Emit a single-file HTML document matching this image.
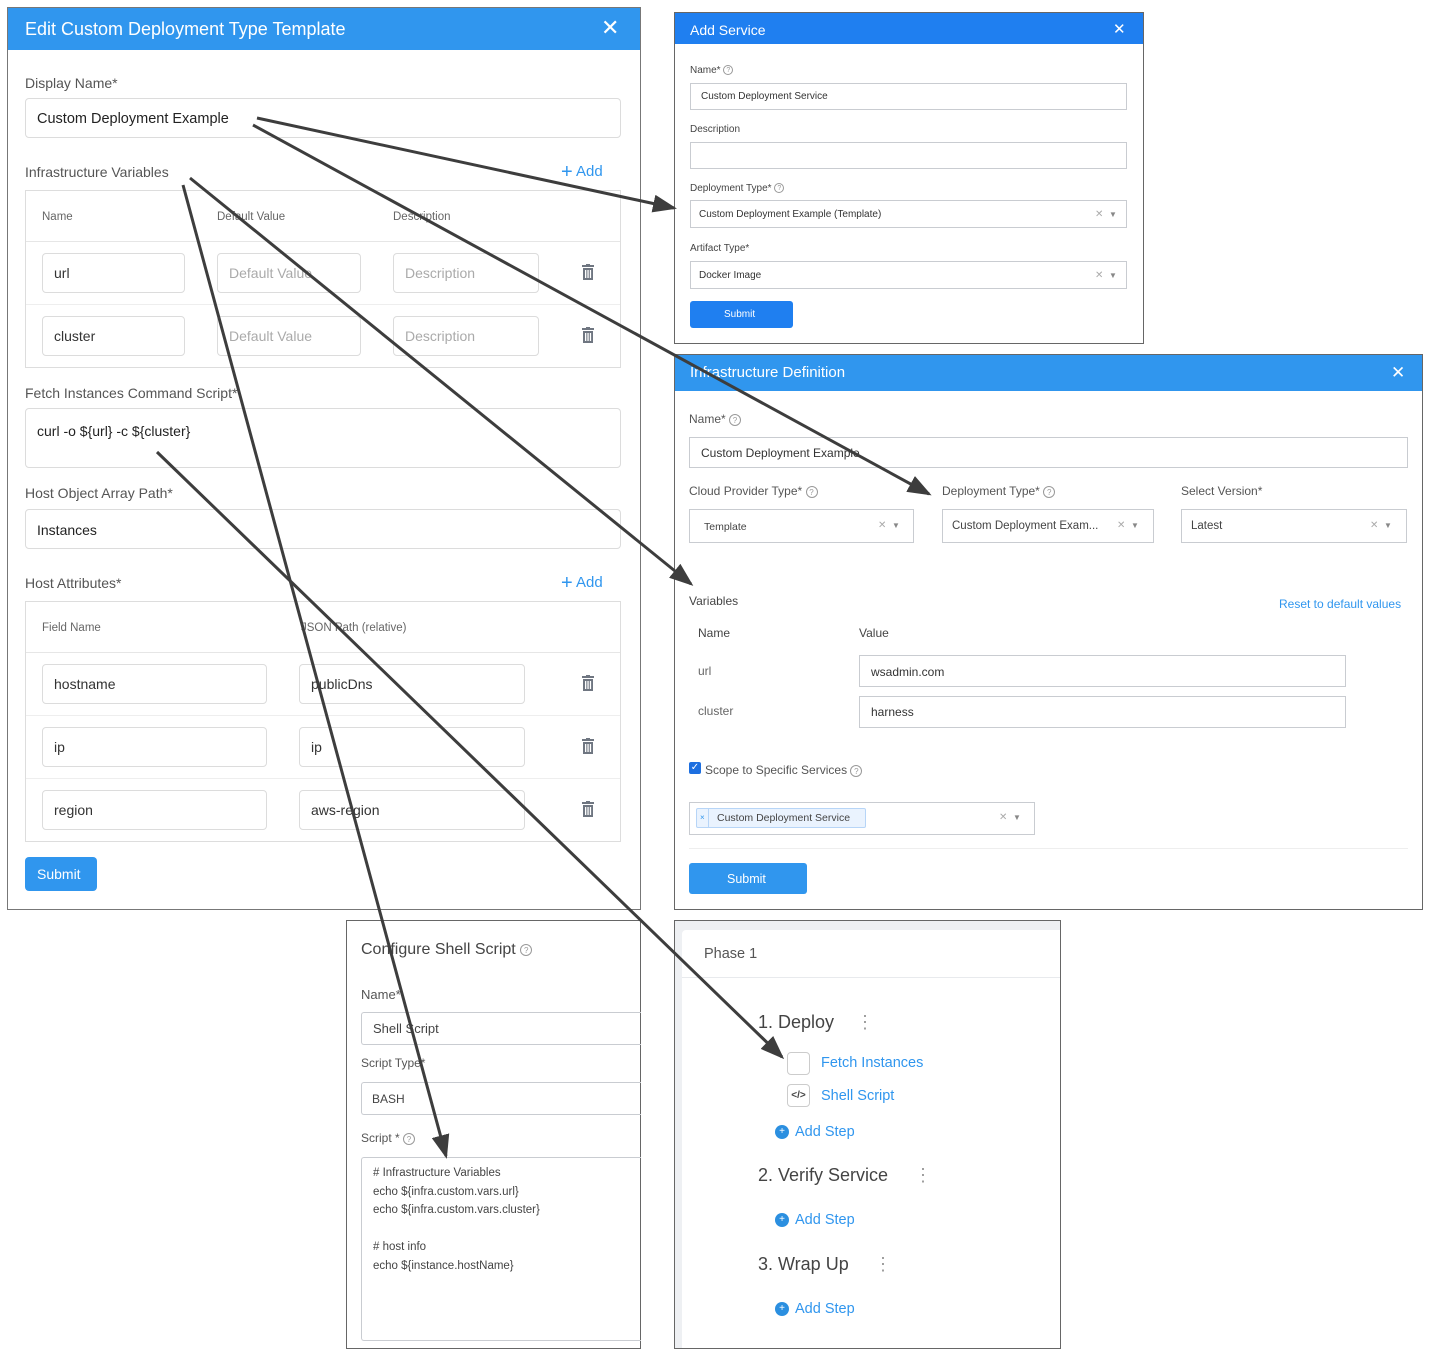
<!DOCTYPE html>
<html><head><meta charset="utf-8">
<style>
*{box-sizing:border-box;margin:0;padding:0}
body{width:1430px;height:1370px;background:#fff;position:relative;overflow:hidden;font-family:"Liberation Sans",sans-serif;color:#333}
.a{position:absolute}
.t{position:absolute;white-space:nowrap;line-height:20px}
.box{position:absolute;border:1px solid #dcdcdc;border-radius:4px;background:#fff}
.in{position:absolute;border:1px solid #c9ccd1;background:#fff}
.hd{position:absolute;color:#fff}
.q{display:inline-block;border:1px solid #999;border-radius:50%;color:#999;text-align:center;vertical-align:middle}
</style></head><body>

<!-- Panel 1 -->
<div class="a" style="left:7px;top:7px;width:634px;height:903px;border:1px solid #777;background:#fff"></div>
<div class="hd" style="left:8px;top:8px;width:632px;height:42px;background:#3096ee"></div>
<div class="t" style="left:25px;top:19px;color:#fff;font-size:18px">Edit Custom Deployment Type Template</div>
<div class="t" style="left:601px;top:18px;color:#fff;font-size:22px">✕</div>

<div class="t" style="left:25px;top:73px;font-size:14px;color:#555">Display Name*</div>
<div class="box" style="left:25px;top:98px;width:596px;height:40px"></div>
<div class="t" style="left:37px;top:109px;font-size:14.5px;color:#222">Custom Deployment Example</div>

<div class="t" style="left:25px;top:162px;font-size:14px;color:#555">Infrastructure Variables</div>
<div class="t" style="left:561px;top:162px;font-size:15px;color:#3096ee"><span style="font-size:20px;vertical-align:-2px">+</span> Add</div>
<div class="a" style="left:25px;top:190px;width:596px;height:178px;border:1px solid #ddd"></div>
<div class="a" style="left:26px;top:241px;width:594px;height:1px;background:#e6e6e6"></div>
<div class="a" style="left:26px;top:304px;width:594px;height:1px;background:#eee"></div>
<div class="t" style="left:42px;top:207px;font-size:11.5px;color:#666">Name</div>
<div class="t" style="left:217px;top:207px;font-size:11.5px;color:#666">Default Value</div>
<div class="t" style="left:393px;top:207px;font-size:11.5px;color:#666">Description</div>
<div class="box" style="left:42px;top:253px;width:143px;height:40px"></div>
<div class="box" style="left:217px;top:253px;width:144px;height:40px"></div>
<div class="box" style="left:393px;top:253px;width:146px;height:40px"></div>
<div class="t" style="left:54px;top:263px;font-size:14px">url</div>
<div class="t" style="left:229px;top:263px;font-size:14px;color:#aaa">Default Value</div>
<div class="t" style="left:405px;top:263px;font-size:14px;color:#aaa">Description</div>
<div class="box" style="left:42px;top:316px;width:143px;height:40px"></div>
<div class="box" style="left:217px;top:316px;width:144px;height:40px"></div>
<div class="box" style="left:393px;top:316px;width:146px;height:40px"></div>
<div class="t" style="left:54px;top:326px;font-size:14px">cluster</div>
<div class="t" style="left:229px;top:326px;font-size:14px;color:#aaa">Default Value</div>
<div class="t" style="left:405px;top:326px;font-size:14px;color:#aaa">Description</div>

<div class="t" style="left:25px;top:383px;font-size:14px;color:#555">Fetch Instances Command Script*</div>
<div class="box" style="left:25px;top:408px;width:596px;height:60px"></div>
<div class="t" style="left:37px;top:421px;font-size:14px;color:#222">curl -o ${url} -c ${cluster}</div>

<div class="t" style="left:25px;top:483px;font-size:14px;color:#555">Host Object Array Path*</div>
<div class="box" style="left:25px;top:509px;width:596px;height:40px"></div>
<div class="t" style="left:37px;top:520px;font-size:14px;color:#222">Instances</div>

<div class="t" style="left:25px;top:573px;font-size:14px;color:#555">Host Attributes*</div>
<div class="t" style="left:561px;top:573px;font-size:15px;color:#3096ee"><span style="font-size:20px;vertical-align:-2px">+</span> Add</div>
<div class="a" style="left:25px;top:601px;width:596px;height:241px;border:1px solid #ddd"></div>
<div class="a" style="left:26px;top:652px;width:594px;height:1px;background:#e6e6e6"></div>
<div class="a" style="left:26px;top:715px;width:594px;height:1px;background:#eee"></div>
<div class="a" style="left:26px;top:778px;width:594px;height:1px;background:#eee"></div>
<div class="t" style="left:42px;top:618px;font-size:11.5px;color:#666">Field Name</div>
<div class="t" style="left:301px;top:618px;font-size:11.5px;color:#666">JSON Path (relative)</div>
<div class="box" style="left:42px;top:664px;width:225px;height:40px"></div>
<div class="box" style="left:299px;top:664px;width:226px;height:40px"></div>
<div class="t" style="left:54px;top:674px;font-size:14px">hostname</div>
<div class="t" style="left:311px;top:674px;font-size:14px">publicDns</div>
<div class="box" style="left:42px;top:727px;width:225px;height:40px"></div>
<div class="box" style="left:299px;top:727px;width:226px;height:40px"></div>
<div class="t" style="left:54px;top:737px;font-size:14px">ip</div>
<div class="t" style="left:311px;top:737px;font-size:14px">ip</div>
<div class="box" style="left:42px;top:790px;width:225px;height:40px"></div>
<div class="box" style="left:299px;top:790px;width:226px;height:40px"></div>
<div class="t" style="left:54px;top:800px;font-size:14px">region</div>
<div class="t" style="left:311px;top:800px;font-size:14px">aws-region</div>

<div class="a" style="left:25px;top:857px;width:72px;height:34px;background:#3096ee;border-radius:4px"></div>
<div class="t" style="left:37px;top:864px;font-size:14px;color:#fff">Submit</div>

<!-- Panel 2 -->
<div class="a" style="left:674px;top:12px;width:470px;height:332px;border:1px solid #666;background:#fff"></div>
<div class="hd" style="left:675px;top:13px;width:468px;height:31px;background:#1f7ff0"></div>
<div class="t" style="left:690px;top:20px;color:#fff;font-size:14px">Add Service</div>
<div class="t" style="left:1113px;top:20px;color:#fff;font-size:15px">✕</div>
<div class="t" style="left:690px;top:61px;font-size:10px;color:#444">Name* <span class="q" style="width:10px;height:10px;font-size:7px;line-height:9px">?</span></div>
<div class="in" style="left:690px;top:83px;width:437px;height:27px"></div>
<div class="t" style="left:701px;top:87px;font-size:10px;color:#333">Custom Deployment Service</div>
<div class="t" style="left:690px;top:120px;font-size:10px;color:#444">Description</div>
<div class="in" style="left:690px;top:142px;width:437px;height:27px"></div>
<div class="t" style="left:690px;top:179px;font-size:10px;color:#444">Deployment Type* <span class="q" style="width:10px;height:10px;font-size:7px;line-height:9px">?</span></div>
<div class="in" style="left:690px;top:200px;width:437px;height:28px"></div>
<div class="t" style="left:699px;top:205px;font-size:10px;color:#333">Custom Deployment Example (Template)</div>
<div class="t" style="left:1095px;top:205px;font-size:10px;color:#aaa">✕ &nbsp;<span style="font-size:8px;color:#888">▼</span></div>
<div class="t" style="left:690px;top:239px;font-size:10px;color:#444">Artifact Type*</div>
<div class="in" style="left:690px;top:261px;width:437px;height:28px"></div>
<div class="t" style="left:699px;top:266px;font-size:10px;color:#333">Docker Image</div>
<div class="t" style="left:1095px;top:266px;font-size:10px;color:#aaa">✕ &nbsp;<span style="font-size:8px;color:#888">▼</span></div>
<div class="a" style="left:690px;top:301px;width:103px;height:27px;background:#1f7ff0;border-radius:3px"></div>
<div class="t" style="left:724px;top:305px;font-size:10px;color:#fff">Submit</div>

<!-- Panel 3 -->
<div class="a" style="left:674px;top:354px;width:749px;height:556px;border:1px solid #666;background:#fff"></div>
<div class="hd" style="left:675px;top:355px;width:747px;height:36px;background:#3096ee"></div>
<div class="t" style="left:690px;top:363px;color:#fff;font-size:15px">Infrastructure Definition</div>
<div class="t" style="left:1391px;top:363px;color:#fff;font-size:17px">✕</div>
<div class="t" style="left:689px;top:409px;font-size:12px;color:#555">Name* <span class="q" style="width:12px;height:12px;font-size:8px;line-height:11px">?</span></div>
<div class="in" style="left:689px;top:437px;width:719px;height:31px"></div>
<div class="t" style="left:701px;top:443px;font-size:12px;color:#333">Custom Deployment Example</div>
<div class="t" style="left:689px;top:481px;font-size:12px;color:#555">Cloud Provider Type* <span class="q" style="width:12px;height:12px;font-size:8px;line-height:11px">?</span></div>
<div class="t" style="left:942px;top:481px;font-size:12px;color:#555">Deployment Type* <span class="q" style="width:12px;height:12px;font-size:8px;line-height:11px">?</span></div>
<div class="t" style="left:1181px;top:481px;font-size:12px;color:#555">Select Version*</div>
<div class="in" style="left:689px;top:509px;width:225px;height:34px"></div>
<div class="in" style="left:942px;top:509px;width:212px;height:34px"></div>
<div class="in" style="left:1181px;top:509px;width:226px;height:34px"></div>
<div class="t" style="left:704px;top:517px;font-size:10.5px;color:#444">Template</div>
<div class="t" style="left:952px;top:516px;font-size:11.5px;color:#444">Custom Deployment Exam...</div>
<div class="t" style="left:1191px;top:516px;font-size:11.5px;color:#444">Latest</div>
<div class="t" style="left:878px;top:516px;font-size:10px;color:#aaa">✕ &nbsp;<span style="font-size:8px;color:#888">▼</span></div>
<div class="t" style="left:1117px;top:516px;font-size:10px;color:#aaa">✕ &nbsp;<span style="font-size:8px;color:#888">▼</span></div>
<div class="t" style="left:1370px;top:516px;font-size:10px;color:#aaa">✕ &nbsp;<span style="font-size:8px;color:#888">▼</span></div>
<div class="t" style="left:689px;top:591px;font-size:12px;color:#444">Variables</div>
<div class="t" style="left:1279px;top:594px;font-size:12px;color:#3096ee">Reset to default values</div>
<div class="t" style="left:698px;top:623px;font-size:12px;color:#444">Name</div>
<div class="t" style="left:859px;top:623px;font-size:12px;color:#444">Value</div>
<div class="t" style="left:698px;top:661px;font-size:12px;color:#666">url</div>
<div class="in" style="left:859px;top:655px;width:487px;height:32px"></div>
<div class="t" style="left:871px;top:662px;font-size:12px;color:#333">wsadmin.com</div>
<div class="t" style="left:698px;top:701px;font-size:12px;color:#666">cluster</div>
<div class="in" style="left:859px;top:696px;width:487px;height:32px"></div>
<div class="t" style="left:871px;top:702px;font-size:12px;color:#333">harness</div>
<div class="a" style="left:689px;top:762px;width:12px;height:12px;background:#1d6fe0;border-radius:2px;color:#fff;font-size:10px;line-height:12px;text-align:center">✓</div>
<div class="t" style="left:705px;top:760px;font-size:12px;color:#555">Scope to Specific Services <span class="q" style="width:12px;height:12px;font-size:8px;line-height:11px">?</span></div>
<div class="in" style="left:689px;top:802px;width:346px;height:33px"></div>
<div class="a" style="left:696px;top:808px;width:170px;height:20px;background:#eaf3fe;border:1px solid #b7d5f7;border-radius:2px"></div>
<div class="a" style="left:708px;top:808px;width:1px;height:20px;background:#b7d5f7"></div>
<div class="t" style="left:700px;top:808px;font-size:8px;color:#3096ee">×</div>
<div class="t" style="left:717px;top:808px;font-size:10.5px;color:#444">Custom Deployment Service</div>
<div class="t" style="left:999px;top:808px;font-size:10px;color:#aaa">✕ &nbsp;<span style="font-size:8px;color:#888">▼</span></div>
<div class="a" style="left:689px;top:848px;width:719px;height:1px;background:#eee"></div>
<div class="a" style="left:689px;top:863px;width:118px;height:31px;background:#3096ee;border-radius:3px"></div>
<div class="t" style="left:727px;top:869px;font-size:12.5px;color:#fff">Submit</div>

<!-- Panel 4 -->
<div class="a" style="left:346px;top:920px;width:295px;height:429px;border:1px solid #666;background:#fff"></div>
<div class="t" style="left:361px;top:940px;font-size:16px;color:#444">Configure Shell Script <span class="q" style="width:12px;height:12px;font-size:8px;line-height:11px">?</span></div>
<div class="t" style="left:361px;top:985px;font-size:13px;color:#555">Name*</div>
<div class="a" style="left:361px;top:1012px;width:280px;height:33px;border:1px solid #c9ccd1;border-right:none;border-radius:3px 0 0 3px"></div>
<div class="t" style="left:373px;top:1019px;font-size:13px;color:#444">Shell Script</div>
<div class="t" style="left:361px;top:1053px;font-size:12px;color:#555">Script Type*</div>
<div class="a" style="left:361px;top:1082px;width:280px;height:33px;border:1px solid #c9ccd1;border-right:none;border-radius:3px 0 0 3px"></div>
<div class="t" style="left:372px;top:1089px;font-size:12px;color:#444">BASH</div>
<div class="t" style="left:361px;top:1128px;font-size:12px;color:#555">Script * <span class="q" style="width:12px;height:12px;font-size:8px;line-height:11px">?</span></div>
<div class="a" style="left:361px;top:1157px;width:280px;height:184px;border:1px solid #c9ccd1;border-right:none;border-radius:3px 0 0 3px"></div>
<div class="a" style="left:373px;top:1164px;font-size:11.5px;color:#444;line-height:18.5px;white-space:pre">#&nbsp;Infrastructure Variables
echo ${infra.custom.vars.url}
echo ${infra.custom.vars.cluster}

# host info
echo ${instance.hostName}</div>

<!-- Panel 5 -->
<div class="a" style="left:674px;top:920px;width:387px;height:429px;border:1px solid #666;background:#eef0f3"></div>
<div class="a" style="left:682px;top:930px;width:378px;height:418px;background:#fff;border-radius:4px 0 0 0"></div>
<div class="a" style="left:682px;top:977px;width:378px;height:1px;background:#e8eaed"></div>
<div class="t" style="left:704px;top:944px;font-size:14.5px;color:#555">Phase 1</div>
<div class="t" style="left:758px;top:1012px;font-size:18px;color:#444">1. Deploy</div>
<div class="t" style="left:856px;top:1012px;font-size:18px;color:#999">⋮</div>
<div class="a" style="left:787px;top:1052px;width:23px;height:23px;border:1px solid #ccc;border-radius:4px"></div>
<div class="t" style="left:821px;top:1053px;font-size:14.5px;color:#3096ee">Fetch Instances</div>
<div class="a" style="left:787px;top:1084px;width:23px;height:23px;border:1px solid #ccc;border-radius:4px;font-size:10px;line-height:21px;text-align:center;color:#444;font-weight:bold">&lt;/&gt;</div>
<div class="t" style="left:821px;top:1086px;font-size:14.5px;color:#3096ee">Shell Script</div>
<div class="a" style="left:775px;top:1125px;width:14px;height:14px;border-radius:50%;background:#2b8fe0;color:#fff;font-size:10px;line-height:14px;text-align:center">+</div>
<div class="t" style="left:795px;top:1122px;font-size:14.5px;color:#3096ee">Add Step</div>
<div class="t" style="left:758px;top:1165px;font-size:18px;color:#444">2. Verify Service</div>
<div class="t" style="left:914px;top:1165px;font-size:18px;color:#999">⋮</div>
<div class="a" style="left:775px;top:1213px;width:14px;height:14px;border-radius:50%;background:#2b8fe0;color:#fff;font-size:10px;line-height:14px;text-align:center">+</div>
<div class="t" style="left:795px;top:1210px;font-size:14.5px;color:#3096ee">Add Step</div>
<div class="t" style="left:758px;top:1254px;font-size:18px;color:#444">3. Wrap Up</div>
<div class="t" style="left:874px;top:1254px;font-size:18px;color:#999">⋮</div>
<div class="a" style="left:775px;top:1302px;width:14px;height:14px;border-radius:50%;background:#2b8fe0;color:#fff;font-size:10px;line-height:14px;text-align:center">+</div>
<div class="t" style="left:795px;top:1299px;font-size:14.5px;color:#3096ee">Add Step</div>

<!-- trash icons & arrows -->
<svg class="a" style="left:0;top:0" width="1430" height="1370" viewBox="0 0 1430 1370">
<defs>
<g id="tr"><rect x="-6" y="-8" width="12" height="2" fill="#6f7681"/><rect x="-2" y="-9" width="4" height="2" fill="#6f7681"/><rect x="-5" y="-5" width="10" height="12" fill="#6f7681"/><rect x="-3" y="-3" width="1.3" height="8" fill="#fff"/><rect x="-0.6" y="-3" width="1.3" height="8" fill="#fff"/><rect x="1.8" y="-3" width="1.3" height="8" fill="#fff"/></g>
<marker id="ah" markerWidth="8" markerHeight="6" refX="7" refY="3" orient="auto" markerUnits="strokeWidth"><path d="M0,0 L8,3 L0,6 Z" fill="#3d3d3d"/></marker>
</defs>
<use href="#tr" x="588" y="273"/><use href="#tr" x="588" y="336"/>
<use href="#tr" x="588" y="684"/><use href="#tr" x="588" y="747"/><use href="#tr" x="588" y="810"/>
<g stroke="#3d3d3d" stroke-width="3" fill="none">
<line x1="257" y1="118" x2="674" y2="208" marker-end="url(#ah)"/>
<line x1="253" y1="125" x2="929" y2="494" marker-end="url(#ah)"/>
<line x1="190" y1="178" x2="691" y2="584" marker-end="url(#ah)"/>
<line x1="183" y1="185" x2="446" y2="1156" marker-end="url(#ah)"/>
<line x1="157" y1="452" x2="782" y2="1057" marker-end="url(#ah)"/>
</g>
</svg>
</body></html>
